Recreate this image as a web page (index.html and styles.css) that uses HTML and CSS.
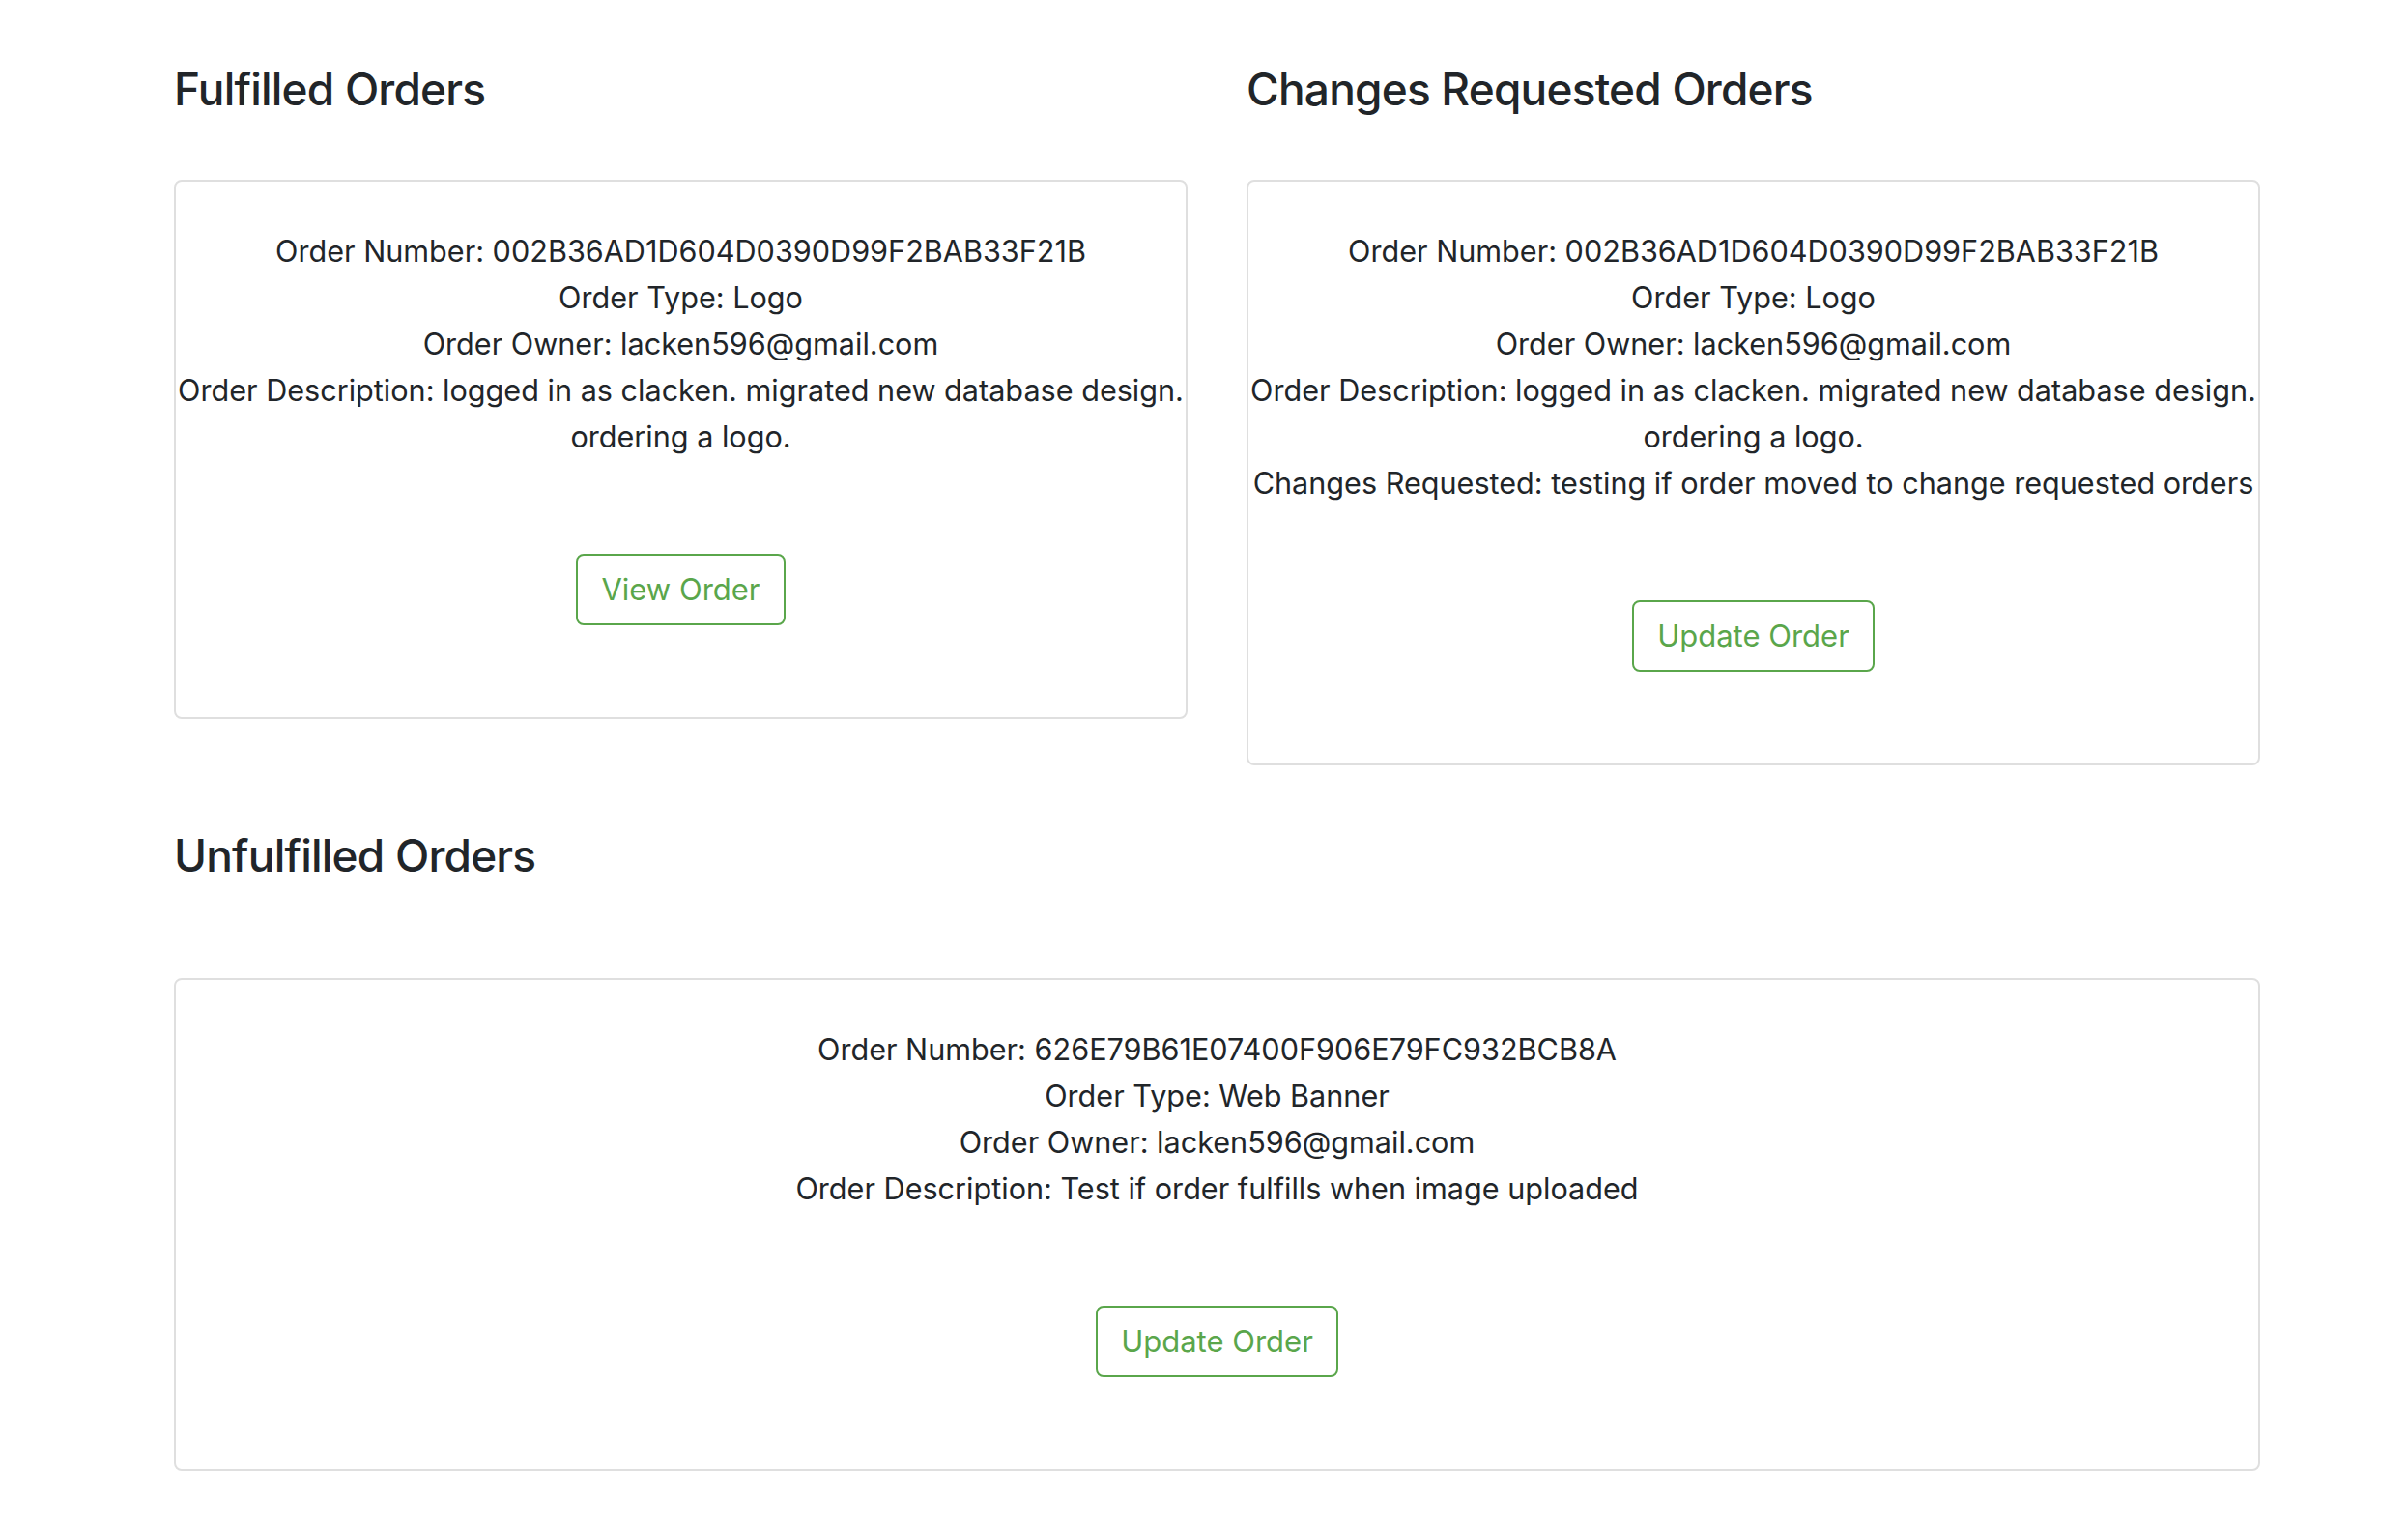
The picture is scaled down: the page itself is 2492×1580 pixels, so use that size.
FILE: index.html
```html
<!DOCTYPE html>
<html lang="en">
<head>
<meta charset="utf-8">
<title>Orders</title>
<link rel="stylesheet" href="styles.css">
</head>
<body>
<main class="page">
  <div class="two-col">
    <section class="section">
      <h2 class="section-title">Fulfilled Orders</h2>
      <div class="card">
        <div class="order-info">
          <p>Order Number: 002B36AD1D604D0390D99F2BAB33F21B</p>
          <p>Order Type: Logo</p>
          <p>Order Owner: lacken596@gmail.com</p>
          <p>Order Description: logged in as clacken. migrated new database design. ordering a logo.</p>
        </div>
        <button class="btn-outline" type="button">View Order</button>
      </div>
    </section>
    <section class="section">
      <h2 class="section-title">Changes Requested Orders</h2>
      <div class="card">
        <div class="order-info">
          <p>Order Number: 002B36AD1D604D0390D99F2BAB33F21B</p>
          <p>Order Type: Logo</p>
          <p>Order Owner: lacken596@gmail.com</p>
          <p>Order Description: logged in as clacken. migrated new database design. ordering a logo.</p>
          <p>Changes Requested: testing if order moved to change requested orders</p>
        </div>
        <button class="btn-outline" type="button">Update Order</button>
      </div>
    </section>
  </div>
  <section class="section section-bottom">
    <h2 class="section-title">Unfulfilled Orders</h2>
    <div class="card card-wide">
      <div class="order-info">
        <p>Order Number: 626E79B61E07400F906E79FC932BCB8A</p>
        <p>Order Type: Web Banner</p>
        <p>Order Owner: lacken596@gmail.com</p>
        <p>Order Description: Test if order fulfills when image uploaded</p>
      </div>
      <button class="btn-outline" type="button">Update Order</button>
    </div>
  </section>
</main>
</body>
</html>
```
FILE: styles.css
```css
html, body {
  margin: 0;
  padding: 0;
  background: #ffffff;
}

body {
  font-family: "Inter", "Noto Sans", "Liberation Sans", sans-serif;
  color: #212529;
}

.page {
  width: 2159px;
  margin-left: 180px;
  padding-top: 64px;
  padding-bottom: 57px;
}

.two-col {
  display: grid;
  grid-template-columns: 1049px 1049px;
  column-gap: 61px;
  align-items: start;
}

.section-title {
  margin: 0;
  font-size: 46px;
  font-weight: 500;
  letter-spacing: -0.8px;
  line-height: 57.6px;
  color: #212529;
}

.card {
  margin-top: 64.4px;
  border: 2px solid #dfdfdf;
  border-radius: 8px;
  padding: 48px 0 95px;
  text-align: center;
  display: flex;
  flex-direction: column;
  align-items: center;
}

.section-bottom {
  margin-top: 65.5px;
}

.section-bottom .card {
  margin-top: 97px;
}

.order-info {
  width: 100%;
}

.order-info p {
  margin: 0;
  font-size: 30.6px;
  line-height: 48px;
}

.btn-outline {
  margin-top: 97px;
  font-family: inherit;
  font-size: 31px;
  line-height: 48px;
  padding: 11px 24px;
  color: #5aa64b;
  background: #ffffff;
  border: 2px solid #5aa64b;
  border-radius: 8px;
  cursor: pointer;
}
```
